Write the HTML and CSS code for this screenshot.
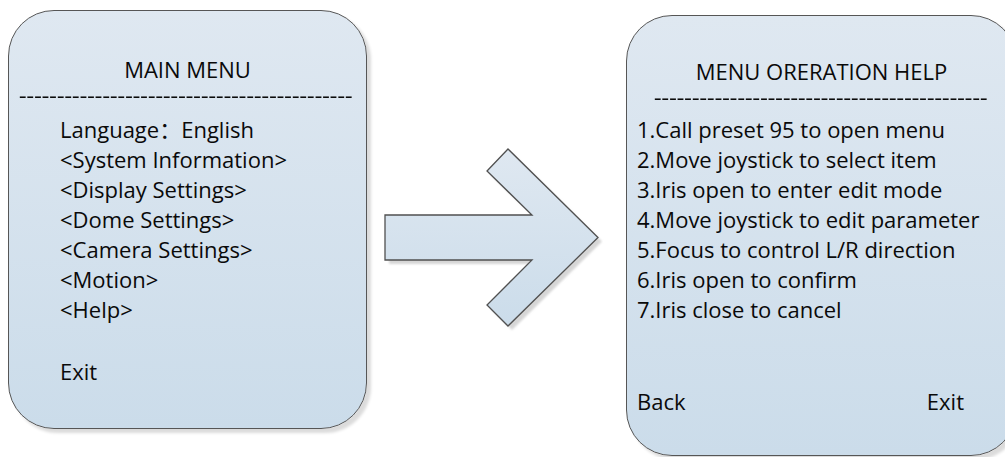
FILE: index.html
```html
<!DOCTYPE html>
<html lang="en">
<head>
    <meta charset="UTF-8">
    <meta name="viewport" content="width=device-width, initial-scale=1.0">
    <title>Main Menu - Operation Help</title>
    <link rel="stylesheet" href="styles.css">
</head>
<body>
    <div class="diagram">
        <div class="panel main-menu">
            <div class="title">MAIN MENU</div>
            <div class="dashes">--------------------------------------------</div>
            <ul class="items">
                <li>Language：English</li>
                <li>&lt;System Information&gt;</li>
                <li>&lt;Display Settings&gt;</li>
                <li>&lt;Dome Settings&gt;</li>
                <li>&lt;Camera Settings&gt;</li>
                <li>&lt;Motion&gt;</li>
                <li>&lt;Help&gt;</li>
            </ul>
            <div class="footer">
                <span>Exit</span>
            </div>
        </div>

        <svg class="arrow" width="225" height="190" viewBox="0 0 225 190">
            <defs>
                <linearGradient id="arrowFill" x1="0" y1="0" x2="0" y2="1">
                    <stop offset="0" stop-color="#dfe8f1"/>
                    <stop offset="1" stop-color="#cbdcea"/>
                </linearGradient>
                <filter id="soft" x="-10%" y="-10%" width="120%" height="120%">
                    <feGaussianBlur stdDeviation="1.2"/>
                </filter>
            </defs>
            <polygon points="3,70 150,70 105,26 126,4 216,92.5 126,181 105,160 150,115 3,115"
                     fill="#d6d6d6" filter="url(#soft)" transform="translate(4,4)"/>
            <polygon points="3,70 150,70 105,26 126,4 216,92.5 126,181 105,160 150,115 3,115"
                     fill="url(#arrowFill)" stroke="#505050" stroke-width="1.3" stroke-linejoin="miter"/>
        </svg>

        <div class="panel help">
            <div class="title">MENU ORERATION HELP</div>
            <div class="dashes">--------------------------------------------</div>
            <ul class="items">
                <li>1.Call preset 95 to open menu</li>
                <li>2.Move joystick to select item</li>
                <li>3.Iris open to enter edit mode</li>
                <li>4.Move joystick to edit parameter</li>
                <li>5.Focus to control L/R direction</li>
                <li>6.Iris open to confirm</li>
                <li>7.Iris close to cancel</li>
            </ul>
            <div class="footer">
                <span>Back</span>
                <span>Exit</span>
            </div>
        </div>
    </div>
</body>
</html>
```

FILE: styles.css
```css
body {
    margin: 0;
    background: #fff;
    overflow: hidden;
    font-family: "Open Sans", "Noto Sans CJK SC", sans-serif;
    color: #0a0a0a;
}
.diagram {
    display: flex;
    align-items: flex-start;
    padding-left: 8px;
    height: 457px;
    overflow: hidden;
}
.panel {
    box-sizing: border-box;
    flex-shrink: 0;
    display: flex;
    flex-direction: column;
    border: 1.5px solid #565656;
    border-radius: 46px;
    background: linear-gradient(#dfe8f1, #cbdcea);
    box-shadow: 4px 4px 3px rgba(0, 0, 0, 0.14);
    font-size: 22px;
    line-height: 30px;
}
.main-menu {
    margin-top: 10px;
    width: 359px;
    height: 419px;
    padding-top: 42.5px;
}
.help {
    margin-top: 15px;
    margin-left: 19px;
    width: 391px;
    height: 441px;
    padding-top: 40px;
}
.title {
    text-align: center;
}

/* row of hyphens under the title, stretched to the width of the original */
.dashes {
    font-size: 16px;
    font-weight: 600;
    letter-spacing: 0.08px;
    white-space: nowrap;
    transform: scaleX(1.45);
    transform-origin: left center;
}
.main-menu .dashes {
    margin-left: 9.5px;
    line-height: 25px;
}
.help .dashes {
    margin-left: 27px;
    line-height: 24px;
}
.items {
    list-style: none;
    margin: 5.5px 0 0;
    padding: 0;
}
.help .items {
    margin-top: 4px;
}
.main-menu .items,
.main-menu .footer {
    padding-left: 51px;
}
.help .items,
.help .footer {
    padding-left: 10px;
}
.footer {
    display: flex;
    justify-content: space-between;
}
.main-menu .footer {
    margin-top: 32px;
}
.help .footer {
    margin-top: 62px;
    padding-right: 52px;
}
.arrow {
    flex-shrink: 0;
    margin-left: 15px;
    margin-top: 145px;
}
```
